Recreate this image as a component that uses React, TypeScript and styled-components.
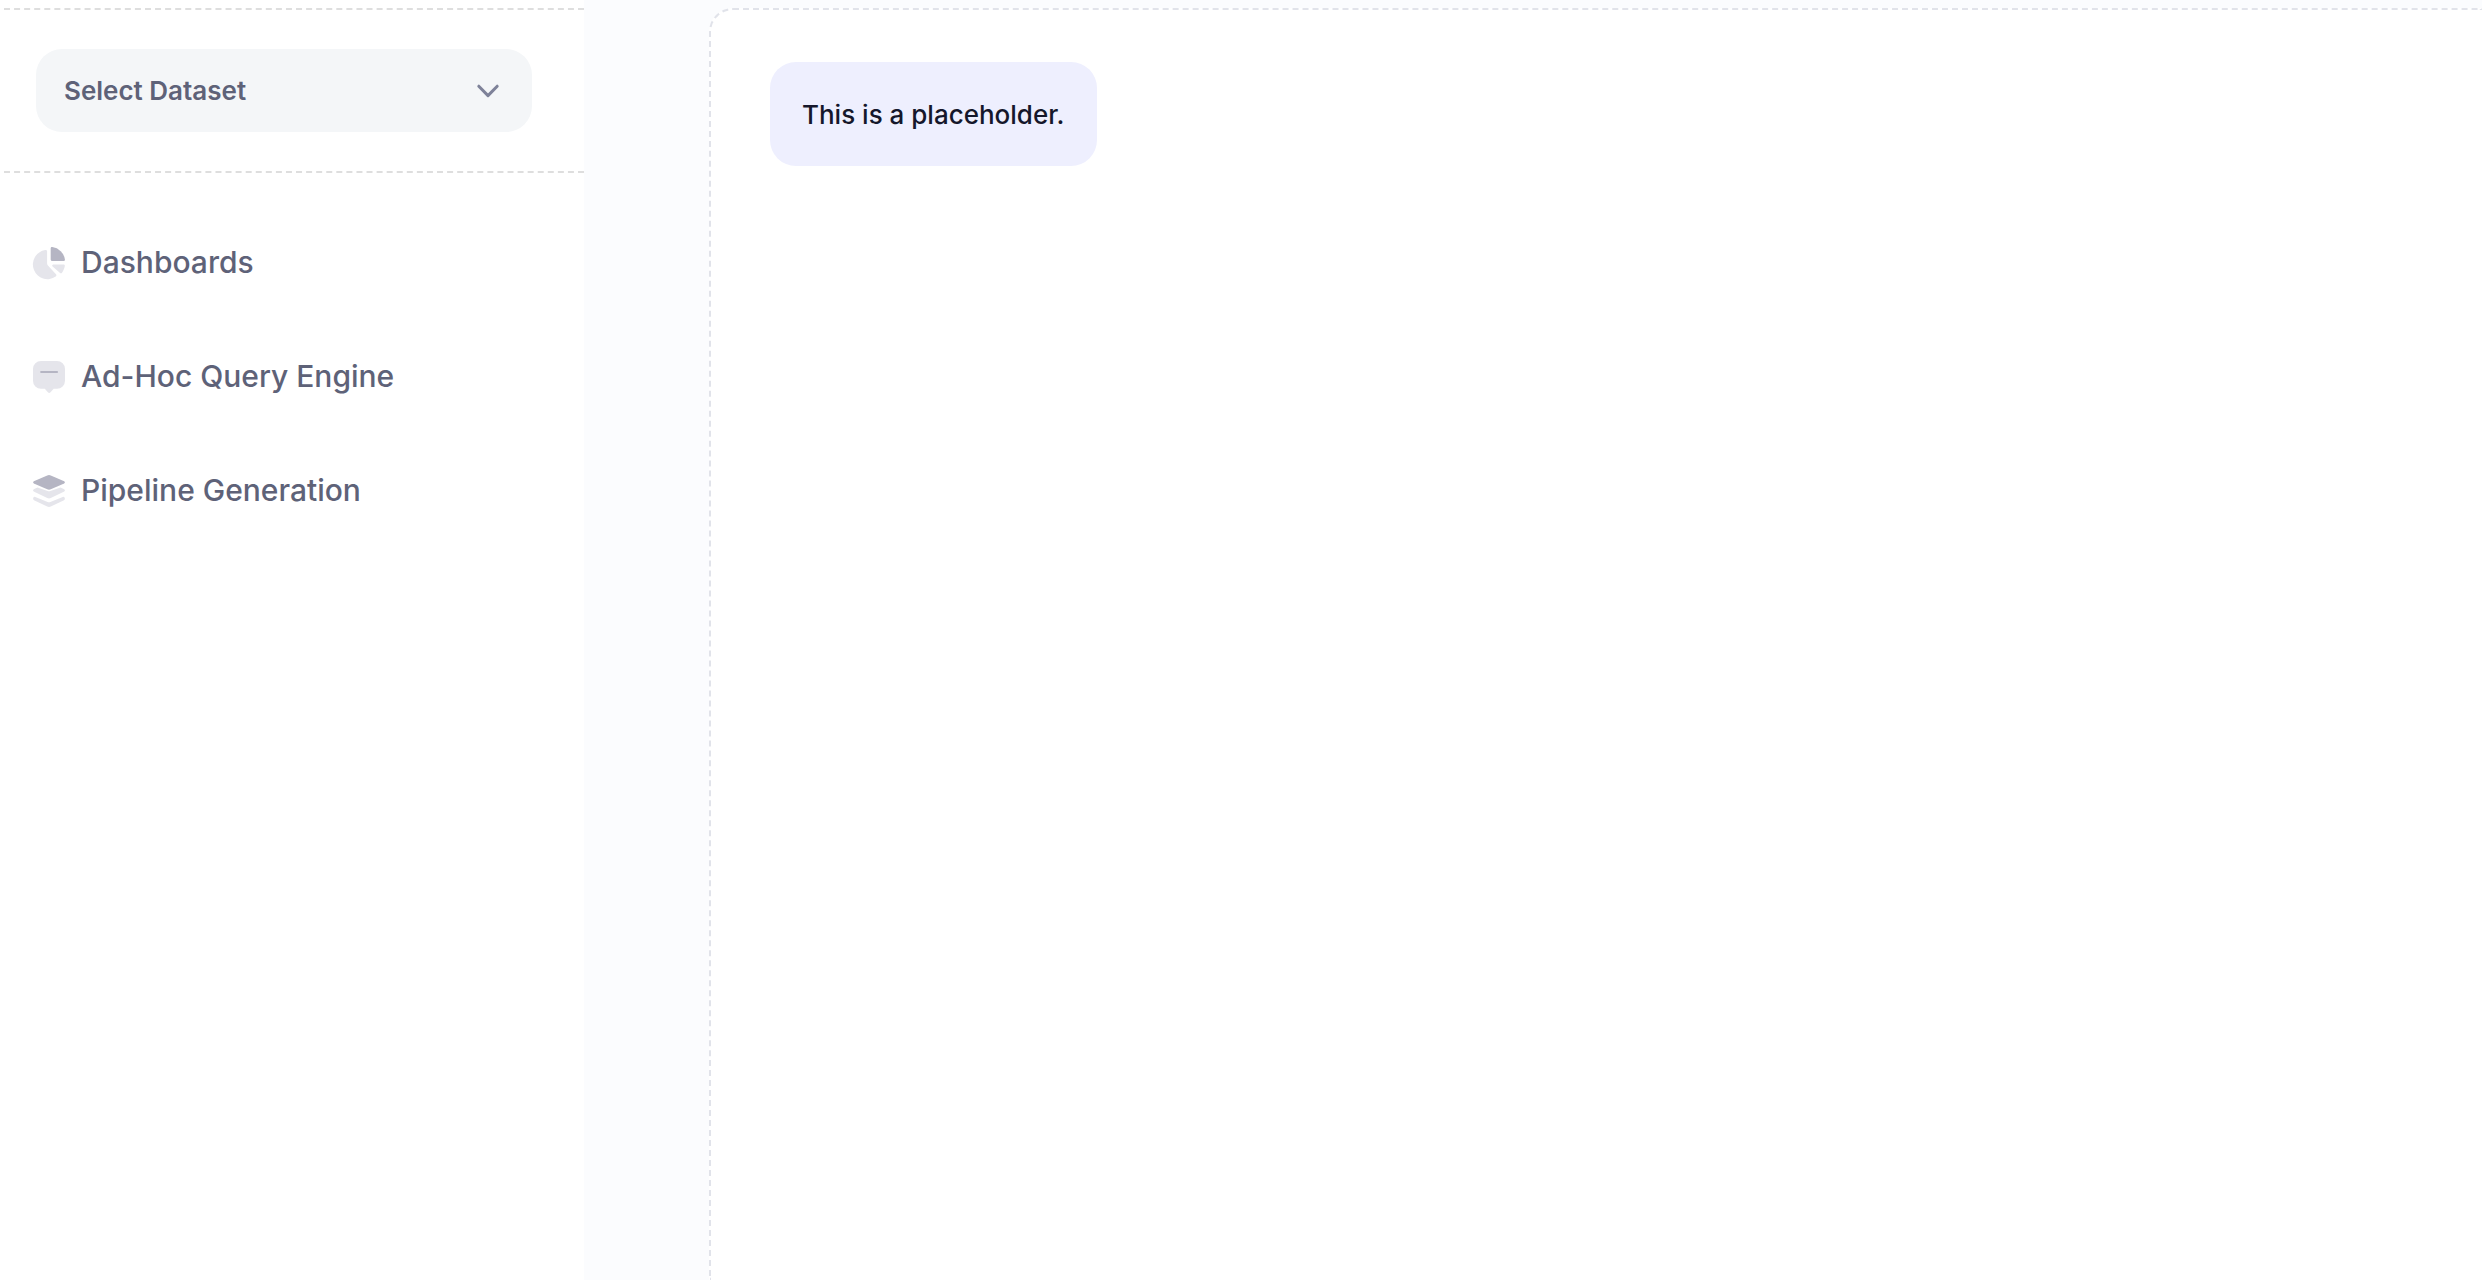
import React from "react";
import styled, { createGlobalStyle } from "styled-components";

const GlobalStyle = createGlobalStyle`
  *, *::before, *::after { box-sizing: border-box; }
  body {
    margin: 0;
    background: #fbfcfe;
    color: #15172b;
    font-family: Inter, "Liberation Sans", sans-serif;
    font-weight: 450;
  }
`;

const Layout = styled.div`
  display: flex;
  min-height: 100vh;
`;

const Sidebar = styled.aside`
  flex: 0 0 584px;
  padding: 8px 0 0 4px;
  background: #fff;
`;

const DatasetSection = styled.div`
  padding: 39px 52px 39px 32px;
  border: 2px dashed #dedede;
  border-width: 2px 0;
`;

const SelectField = styled.div`
  display: grid;
  align-items: center;

  > * { grid-area: 1 / 1; }
`;

const Select = styled.select`
  appearance: none;
  width: 100%;
  height: 83px;
  padding: 0 72px 0 28px;
  border: 0;
  border-radius: 26px;
  background: #f4f6f8;
  color: #5e6278;
  font: 600 26px/32px Inter, "Liberation Sans", sans-serif;
`;

const Chevron = styled.svg`
  justify-self: end;
  width: 24px;
  height: 24px;
  margin-right: 32px;
  pointer-events: none;
`;

const Nav = styled.nav`
  display: flex;
  flex-direction: column;
  gap: 42px;
  padding: 54px 28px;
`;

const NavLink = styled.a`
  display: flex;
  align-items: center;
  gap: 15px;
  height: 72px;
  color: #5e6278;
  font-size: 30px;
  line-height: 40px;
  text-decoration: none;
`;

const NavLabel = styled.span`
  padding-bottom: 2px;
`;

const NavIcon = styled.svg`
  flex: none;
  width: 34px;
  height: 34px;
`;

const Main = styled.main`
  flex: 1;
  display: flex;
  min-width: 0;
  padding: 8px 0 0 125px;
`;

const Panel = styled.section`
  flex: 1;
  padding: 52px 59px;
  border: 2px dashed #e1e3ea;
  border-width: 2px 0 0 2px;
  border-top-left-radius: 24px;
  background: #fff;
`;

const Message = styled.p`
  width: fit-content;
  margin: 0;
  padding: 33px 32px 31px;
  border-radius: 26px;
  background: #eeeffe;
  font-size: 26px;
  line-height: 40px;
`;

const DARK = "#b5b5c3";
const LIGHT = "#e5e5eb";

const PieIcon = () => (
  <NavIcon viewBox="-1 -1 34 34" aria-hidden="true">
    <path fill={DARK} d="M17.7 1.4C17.7.5 18.4 0 19.3.1A14.6 14.6 0 0 1 31.9 12.5C32 13.4 31.4 14 30.5 14H19.2C18.3 14 17.7 13.4 17.7 12.5Z" />
    <path fill={LIGHT} d="M14.1 4.5C14.1 3.5 13.3 2.9 12.3 3.1A14.6 14.6 0 1 0 22.7 29.6C23.5 29 23.6 28.1 23 27.3L14.7 18.2C14.3 17.7 14.1 17.2 14.1 16.6Z" />
    <path fill={LIGHT} d="M20.4 17.5H30.5C31.5 17.5 32 18.1 31.8 19C31.3 21.6 30.4 23.8 29 25.7C28.4 26.5 27.5 26.5 26.8 25.8L19.6 19.4C18.8 18.6 19.2 17.5 20.4 17.5Z" />
  </NavIcon>
);

const MessageIcon = () => (
  <NavIcon viewBox="-1 -1 34 34" aria-hidden="true">
    <path fill={LIGHT} d="M8 0H24A8 8 0 0 1 32 8V19.8A8 8 0 0 1 24 27.8H20.6L17.5 31.3Q16.2 32.5 14.9 31.3L11.8 27.8H8A8 8 0 0 1 0 19.8V8A8 8 0 0 1 8 0Z" />
    <path stroke={DARK} strokeWidth="2.2" strokeLinecap="round" d="M8.2 11H24" />
  </NavIcon>
);

const LayersIcon = () => (
  <NavIcon viewBox="-1 -1 34 34" aria-hidden="true">
    <path fill={LIGHT} d="M4.5 12.4L14.6 16Q16 16.5 17.4 16L27.5 12.4L31.3 14.3Q32.7 15.4 31.3 16.6L17.8 23Q16 23.8 14.2 23L.7 16.6Q-.7 15.4.7 14.3Z" />
    <path fill={LIGHT} d="M2.3 21.9L14.6 27Q16 27.6 17.4 27L29.7 21.9Q31.1 21.5 31.8 22.9Q32.3 24.4 31 25.3L17.8 31.5Q16 32.3 14.2 31.5L1 25.3Q-.3 24.4.2 22.9Q.9 21.5 2.3 21.9Z" />
    <path fill={DARK} d="M14.2.4Q16-.3 17.8.4L31.2 6.2Q32.8 7.3 31.2 8.5L17.8 14.3Q16 15 14.2 14.3L.8 8.5Q-.8 7.3.8 6.2Z" />
  </NavIcon>
);

const navItems = [
  { label: "Dashboards", Icon: PieIcon },
  { label: "Ad-Hoc Query Engine", Icon: MessageIcon },
  { label: "Pipeline Generation", Icon: LayersIcon },
];

export default function App() {
  return (
    <>
      <GlobalStyle />
      <Layout>
        <Sidebar>
          <DatasetSection>
            <SelectField>
              <Select aria-label="Select Dataset" defaultValue="">
                <option value="">Select Dataset</option>
              </Select>
              <Chevron viewBox="0 0 24 24" fill="none" aria-hidden="true">
                <path d="M2.8 7.2L12 16.6L21.2 7.2" stroke="#7e8299" strokeWidth="3" strokeLinecap="round" strokeLinejoin="round" />
              </Chevron>
            </SelectField>
          </DatasetSection>
          <Nav>
            {navItems.map(({ label, Icon }) => (
              <NavLink href="#" key={label}>
                <Icon />
                <NavLabel>{label}</NavLabel>
              </NavLink>
            ))}
          </Nav>
        </Sidebar>
        <Main>
          <Panel>
            <Message>This is a placeholder.</Message>
          </Panel>
        </Main>
      </Layout>
    </>
  );
}
